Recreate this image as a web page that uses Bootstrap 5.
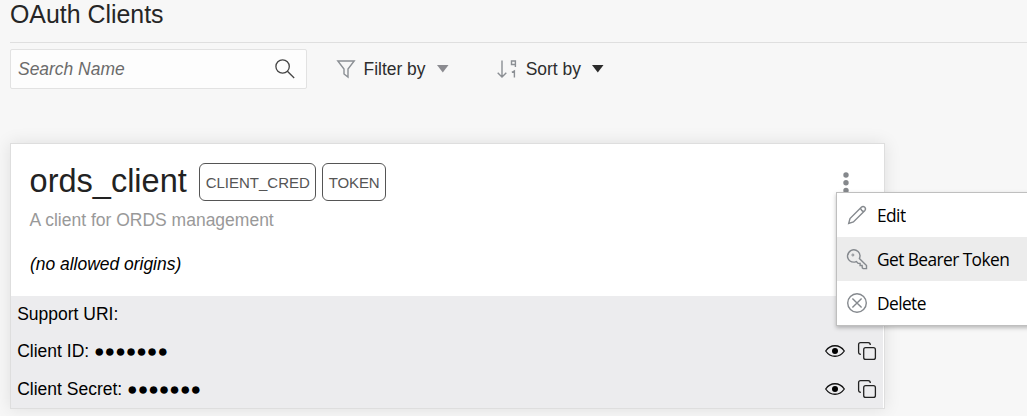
<!DOCTYPE html>
<html lang="en">
<head>
<meta charset="utf-8">
<title>OAuth Clients</title>
<meta name="viewport" content="width=device-width, initial-scale=1">
<link href="https://cdn.jsdelivr.net/npm/bootstrap@5.3.0/dist/css/bootstrap.min.css" rel="stylesheet">
<style>
  body { background: #f7f7f7; color: #000; font: 17.5px/24px "Liberation Sans", Arial, sans-serif; height: 416px; overflow: hidden; }
  svg { display: block; flex: none; fill: none; overflow: visible; }
  .page { padding-left: 10px; }
  .page-title { font-size: 24.9px; line-height: 28px; height: 43px; color: #262626; border-bottom: 1px solid #dfdfdf; }
  .search-box { width: 297px; height: 40px; background: #fdfdfd; border: 1px solid #e2e2e2; border-radius: 2px; padding: 0 11px 0 7px; }
  .search-box input { width: 200px; outline: 0; font-style: italic; font-size: 17.45px; height: 38px; }
  .search-box input::placeholder { color: #6b6b6b; opacity: 1; }
  .toolbar { height: 40px; margin-top: 6px; color: #2d2d2d; font-size: 17.45px; }
  .tool { background: none; border: 0; padding: 0; color: inherit; }
  .filter-tool { margin-left: 30px; }
  .sort-tool { margin-left: 48px; }
  .tool span { margin: 0 11px 0 8.5px; }
  .sort-tool span { margin-left: 9.2px; }
  .client-card { width: 875px; height: 266px; margin-top: 54px; border: 1px solid #dedede; border-radius: 0; box-shadow: 0 0 16px rgba(0,0,0,.1); --bs-card-color: #000; }
  .client-head { height: 152px; padding: 19px 19px 0 18.6px; }
  .client-name { font-size: 32.5px; line-height: 36px; color: #222; margin-right: 12.4px; }
  .tag { height: 38px; line-height: 37px; border: 1px solid #555; border-radius: 6px; font-size: 15px; color: #555; padding: 0 5.5px; margin-right: 6px; }
  .tag.short { letter-spacing: -.15px; }
  .client-desc { color: #999; margin-top: 7px; }
  .origins { font-size: 17.45px; font-style: italic; margin: 20px 0 0 .4px; }
  .client-info { background: #ececee; margin-right: 1px; height: 112px; padding: 0 7px 0 6.2px; }
  .info-row { height: 37.5px; padding-bottom: 2px; }
  .copy-icon { margin-left: 13px; }
  .kebab { left: 832px; top: 28px; }
  .action-menu { left: 836px; top: 192px; width: 200px; background: #fff; border: 1px solid #bfbfbf; box-shadow: 0 2px 4px rgba(0,0,0,.25); font: 18px/44px "Open Sans", sans-serif; }
  .menu-row { height: 44px; padding-left: 10px; color: #000; }
  .menu-row span { margin-left: 10px; letter-spacing: -.6px; white-space: nowrap; transform: scaleX(.963); transform-origin: left; }
  .menu-row.current { background: #ececec; }
</style>
</head>
<body>
<main class="page">
  <h1 class="page-title fw-normal mb-0">OAuth Clients</h1>
  <div class="toolbar d-flex align-items-center">
    <div class="search-box d-flex align-items-center justify-content-between">
      <input class="border-0 bg-transparent p-0" type="text" placeholder="Search Name" aria-label="Search Name">
      <svg width="20" height="20" stroke="#444" stroke-width="1.3"><circle cx="7.6" cy="7.5" r="6.7"/><path d="M12.4 12.3 19.2 19"/></svg>
    </div>
    <button class="tool filter-tool d-flex align-items-center">
      <svg width="18" height="18" stroke="#8b8f94" stroke-width="1.4"><path d="M.8 1H17.2L11 9V17L7 14V9Z"/></svg>
      <span>Filter by</span>
      <svg width="12" height="8"><path d="M0 0H11.5L5.8 7.5Z" fill="#8b8b90"/></svg>
    </button>
    <button class="tool sort-tool d-flex align-items-center">
      <svg width="20" height="18" stroke="#8b8f94" stroke-width="1.4"><path d="M5 .5V16.8M.7 12.8 5 17 9.3 12.8M18.4 7V1H14.5V4.5H18.4M14.8 12.3 17.4 11V17.4"/></svg>
      <span>Sort by</span>
      <svg width="12" height="8"><path d="M0 0H11.5L5.8 7.5Z" fill="#2b2b2b"/></svg>
    </button>
  </div>
  <section class="client-card card">
    <div class="client-head">
      <div class="d-flex">
        <h2 class="client-name fw-normal mb-0">ords_client</h2>
        <span class="tag">CLIENT_CRED</span><span class="tag short">TOKEN</span>
      </div>
      <div class="client-desc">A client for ORDS management</div>
      <div class="origins">(no allowed origins)</div>
      <svg class="kebab position-absolute" width="6" height="22"><g fill="#85888c"><circle cx="3" cy="3" r="2.7"/><circle cx="3" cy="10.7" r="2.7"/><circle cx="3" cy="18.4" r="2.7"/></g></svg>
    </div>
    <div class="client-info">
      <div class="info-row d-flex align-items-center">Support URI:</div>
      <div class="info-row d-flex align-items-center">
        <span class="me-auto">Client ID: ●●●●●●●</span>
        <svg width="20" height="12" stroke="#111" stroke-width="1.3"><path d="M.7 6C5.5-1 14.5-1 19.3 6C14.5 13 5.5 13 .7 6Z"/><circle cx="10" cy="6" r="3" fill="#000" stroke="none"/></svg>
        <svg class="copy-icon" width="18" height="18" stroke="#222" stroke-width="1.3"><rect x="5.7" y="5.7" width="11.7" height="11.7" rx="2"/><path d="M2.9 12.3Q.6 12.3 .6 10V2.6Q.6.6 2.6.6H10.2Q12.3.6 12.3 2.9"/></svg>
      </div>
      <div class="info-row d-flex align-items-center">
        <span class="me-auto">Client Secret: ●●●●●●●</span>
        <svg width="20" height="12" stroke="#111" stroke-width="1.3"><path d="M.7 6C5.5-1 14.5-1 19.3 6C14.5 13 5.5 13 .7 6Z"/><circle cx="10" cy="6" r="3" fill="#000" stroke="none"/></svg>
        <svg class="copy-icon" width="18" height="18" stroke="#222" stroke-width="1.3"><rect x="5.7" y="5.7" width="11.7" height="11.7" rx="2"/><path d="M2.9 12.3Q.6 12.3 .6 10V2.6Q.6.6 2.6.6H10.2Q12.3.6 12.3 2.9"/></svg>
      </div>
    </div>
  </section>
</main>
<div class="action-menu position-absolute">
  <div class="menu-row d-flex align-items-center">
    <svg width="20" height="20" stroke="#85898e" stroke-width="1.4"><path d="M1.7 18.4 3 13.6 14.3 2.3Q16 .7 17.8 2.2Q19.3 4 17.7 5.7L6.4 17 1.7 18.4ZM13.5 3.2Q14.7 6.3 16.8 6.5"/></svg>
    <span>Edit</span>
  </div>
  <div class="menu-row current d-flex align-items-center">
    <svg width="20" height="20" stroke="#85898e" stroke-width="1.4"><path d="M12.4 9.6Q14.1 5.6 11.1 2.6Q7.8-.6 3.7 1.6Q-.2 4.3.7 8.8Q2.4 13.6 7.8 13.1L9.4 12.6 11.1 14.4H13.1V16.5H15.1L15.3 18.9 16.2 19.6H19.5V16.5Z"/><circle cx="5.9" cy="6" r="1" stroke-width="1"/></svg>
    <span>Get Bearer Token</span>
  </div>
  <div class="menu-row d-flex align-items-center">
    <svg width="20" height="20" stroke="#85898e" stroke-width="1.4"><circle cx="10" cy="10" r="9.3"/><path d="M5.4 5.4 14.6 14.6M14.6 5.4 5.4 14.6"/></svg>
    <span>Delete</span>
  </div>
</div>
<script src="https://cdn.jsdelivr.net/npm/bootstrap@5.3.0/dist/js/bootstrap.bundle.min.js"></script>
</body>
</html>
